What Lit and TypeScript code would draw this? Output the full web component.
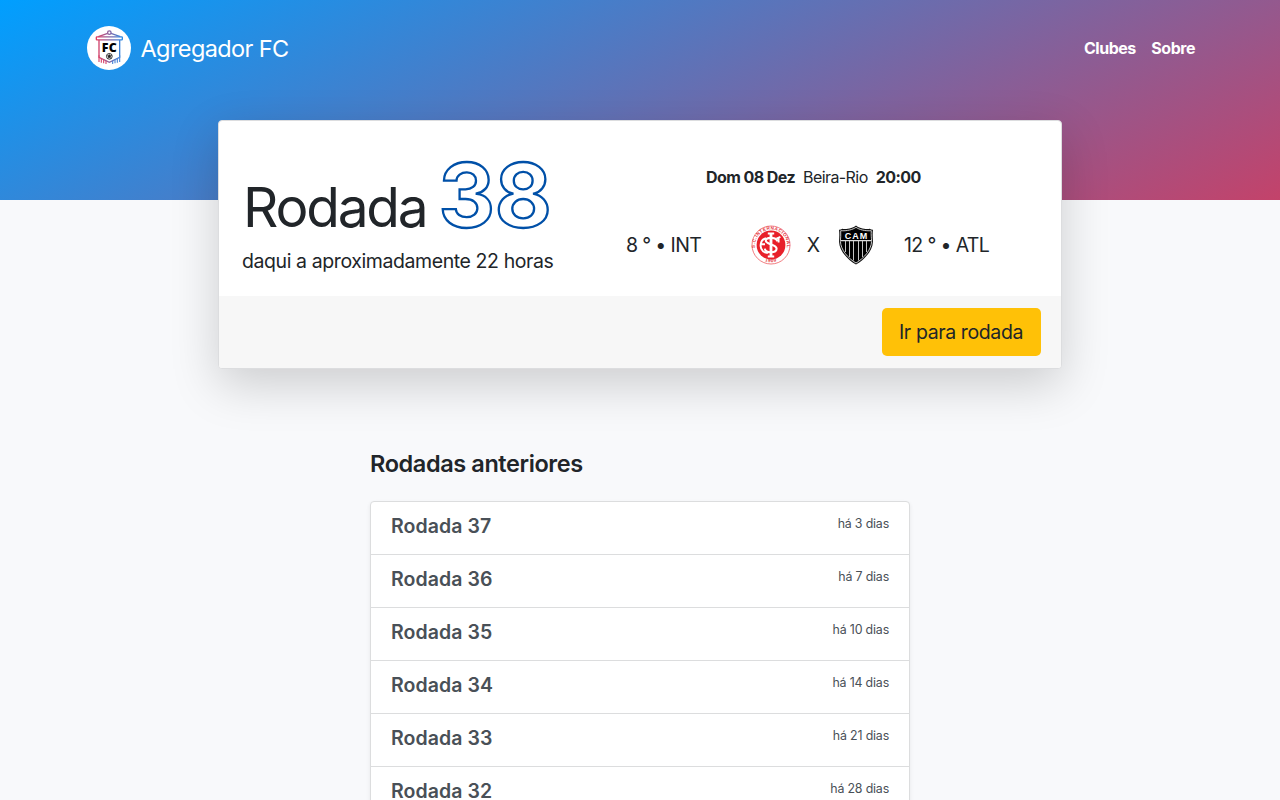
import { LitElement, html, css } from "lit";
import { customElement } from "lit/decorators.js";

const rounds = [
  { name: "Rodada 37", when: "há 3 dias" },
  { name: "Rodada 36", when: "há 7 dias" },
  { name: "Rodada 35", when: "há 10 dias" },
  { name: "Rodada 34", when: "há 14 dias" },
  { name: "Rodada 33", when: "há 21 dias" },
  { name: "Rodada 32", when: "há 28 dias" },
];

const logo = html`<svg class="logo" viewBox="0 0 66 66">
  <defs>
    <linearGradient id="flag" x1="14" x2="53" y1="0" y2="0" gradientUnits="userSpaceOnUse">
      <stop offset="0" stop-color="#e23a5e" />
      <stop offset="1" stop-color="#2b8be6" />
    </linearGradient>
  </defs>
  <circle cx="33" cy="33" r="33" fill="#fff" />
  <g fill="none" stroke="url(#flag)" stroke-width="2">
    <circle cx="33.5" cy="10" r="2.6" />
    <path d="M17 16L31 11M50 16L36 11" />
    <rect x="14" y="16.2" width="39" height="4.6" rx="1" />
    <path d="M18 21V47L33.5 54.5L49 47V21" />
  </g>
  <g stroke-width="1.7" fill="none">
    <path stroke="#d8466c" d="M18 44v10M21.5 48v7M25 50v6M28.5 52v5" />
    <path stroke="#4a86d8" d="M49 44v10M45.5 48v7M42 50v6M38.5 52v5" />
  </g>
  <text x="33.8" y="38.5" text-anchor="middle" class="logo-text">FC</text>
  <circle cx="33.5" cy="45.5" r="4.3" fill="#fff" stroke="#222" stroke-width="1.3" />
  <path d="M33.5 43l2.3 1.7-.9 2.8h-2.8l-.9-2.8zM33.5 43v-2M35.8 44.7l2-.8M34.9 47.5l1.3 1.8M32.1 47.5l-1.3 1.8M31.2 44.7l-2-.8" fill="#222" stroke="#222" stroke-width=".7" />
</svg>`;

const inter = html`<svg class="crest" viewBox="0 0 40 40">
  <defs>
    <path id="ring" d="M6.7 29.5A16 16 0 1 1 33.3 29.5" />
    <path id="ringb" d="M11 34.7A18.2 18.2 0 0 0 29 34.7" />
  </defs>
  <circle cx="20" cy="20" r="19" fill="#fff" stroke="#ee5a60" stroke-width=".8" />
  <circle cx="20" cy="20" r="14.4" fill="#e8202a" />
  <text class="ring-text"><textPath href="#ring" startOffset="50%" text-anchor="middle">S.C.INTERNACIONAL</textPath></text>
  <text class="ring-text"><textPath href="#ringb" startOffset="50%" text-anchor="middle">1909</textPath></text>
  <g fill="none" stroke="#fff">
    <path stroke-width="2.8" d="M20 8V32" />
    <path stroke-width="2" d="M16.8 8.6h6.4M16.8 31.4h6.4" />
    <path stroke-width="2.1" d="M26.2 16.4C26 12 15 11.6 14.8 15.8C14.6 19.4 25.8 19.2 25.6 23.8C25.3 28.6 14.4 28.4 13.8 23.6" />
    <path stroke-width="1.9" d="M25.5 13.6L29.4 11.8M27.6 12.4V17.5M15 13.2C9 14.5 8 23 12.2 26.4C13.5 27.6 15.5 28 17.2 27.6M9.6 19.3H14" />
  </g>
</svg>`;

const atletico = html`<svg class="crest" viewBox="0 0 40 40">
  <path d="M20 .5C22.6 3 29.5 4.6 33.6 3.8Q35.5 5 37 4.8C36.4 9 36.8 13 37 16.5C36.6 26 28.5 34.6 20 39.6C11.5 34.6 3.4 26 3 16.5C3.2 13 3.6 9 3 4.8Q4.5 5 6.4 3.8C10.5 4.6 17.4 3 20 .5Z" fill="#111" />
  <path d="M20 2.3C23 4.7 29.5 6.2 35.3 5.7C34.9 9.5 35.5 13 35.6 16.3C35.2 25 28 33.2 20 38C12 33.2 4.8 25 4.4 16.3C4.5 13 5.1 9.5 4.7 5.7C10.5 6.2 17 4.7 20 2.3Z" fill="#000" stroke="#ddd" stroke-width=".9" />
  <path d="M5 15.7H35" stroke="#ddd" stroke-width="1.2" />
  <path d="M9.5 16V27M13.5 16V32M17.5 16V35.5M22.5 16V35.5M26.5 16V32M30.5 16V27" stroke="#c4c4c4" stroke-width="1" />
  <text x="20.5" y="13.7" text-anchor="middle" class="cam-text">CAM</text>
</svg>`;

@customElement("app-root")
export class AppRoot extends LitElement {
  static styles = css`
    :host {
      display: block;
      height: 800px;
      overflow: hidden;
      background: #f8f9fb;
      color: #212529;
      font-family: Inter, "Liberation Sans", sans-serif;
    }
    * { box-sizing: border-box; }
    .hero {
      height: 200px;
      padding: 26px 85px 0 87px;
      background: linear-gradient(154deg, #009fff 0, #ec2f4b 895px);
    }
    .nav { display: flex; align-items: center; height: 44px; color: #fff; }
    .logo { width: 44px; height: 44px; display: block; }
    .logo-text { font: 900 18.5px "Noto Sans", sans-serif; fill: #000; letter-spacing: 0.6px; }
    .brand { margin-left: 9.5px; padding-top: 1px; font-size: 23.5px; letter-spacing: -0.6px; flex: 1; line-height: 30px; }
    .links { display: flex; gap: 15.5px; font-size: 16px; font-weight: 700; letter-spacing: -0.48px; }
    .card {
      width: 844px;
      height: 249px;
      margin: -80px auto 0;
      border: 1px solid #dcdddf;
      border-radius: 4px;
      background: #fff;
      box-shadow: 0 16px 48px rgba(0, 0, 0, 0.175);
      overflow: hidden;
      position: relative;
    }
    .body { display: flex; height: 175px; }
    .round { width: 356px; padding: 28.5px 0 0 23px; white-space: nowrap; }
    .title { display: flex; align-items: baseline; height: 96.5px; line-height: 90px; }
    .word { font-size: 55px; font-weight: 370; letter-spacing: -2.2px; margin-left: 1px; }
    .number {
      font-size: 87.5px;
      font-weight: 700;
      letter-spacing: -0.2px;
      margin-left: 12px;
      color: transparent;
      -webkit-text-stroke: 2.3px #0050a8;
    }
    .soon { font-size: 19.5px; font-weight: 370; line-height: 30px; letter-spacing: -0.41px; }
    .match { flex: 1; padding-top: 44px; }
    .info { display: flex; gap: 8px; margin-left: 131px; font-size: 16px; font-weight: 370; line-height: 24px; letter-spacing: -0.57px; }
    .info b { font-weight: 700; }
    .teams { display: flex; align-items: center; margin: 36px 0 0 51px; height: 40px; font-size: 19.5px; font-weight: 370; letter-spacing: -0.64px; }
    .home { width: 125px; }
    .versus { width: 45px; padding-right: 1px; text-align: center; }
    .away { margin-left: 28px; }
    .crest { width: 40px; height: 40px; display: block; }
    .ring-text { font: 700 4.6px "Liberation Sans", sans-serif; fill: #e5343c; letter-spacing: 0.45px; }
    .cam-text { font: 700 9px "Liberation Sans", sans-serif; fill: #fff; letter-spacing: 1px; }
    .footer { height: 72px; padding: 12px 20px; background: #f7f7f7; display: flex; justify-content: flex-end; }
    .btn {
      width: 159px; height: 48px; padding: 0 1px 0 0; border: 0; border-radius: 5px;
      background: #ffc107; color: #212529;
      font: 420 19.5px Inter, sans-serif;
      letter-spacing: -0.38px;
    }
    .previous { width: 540px; margin: 80px auto 0; }
    .heading { margin: 0; font-size: 23.5px; font-weight: 560; line-height: 29px; letter-spacing: -0.4px; }
    .list {
      margin-top: 23px; border: 1px solid #dcddde; border-radius: 4px; background: #fff;
      box-shadow: 0 2px 4px rgba(0, 0, 0, 0.075);
    }
    .row { height: 53px; padding: 12px 20px; display: flex; justify-content: space-between; border-bottom: 1px solid #dcddde; color: #495057; }
    .name { font-size: 19.5px; font-weight: 570; line-height: 24px; letter-spacing: 0.07px; }
    .when { font-size: 12.4px; font-weight: 420; line-height: 19px; letter-spacing: -0.18px; }
  `;

  render() {
    return html`
      <header class="hero">
        <nav class="nav">
          ${logo}
          <span class="brand">Agregador FC</span>
          <div class="links"><span>Clubes</span><span>Sobre</span></div>
        </nav>
      </header>
      <section class="card">
        <div class="body">
          <div class="round">
            <div class="title"><span class="word">Rodada</span><span class="number">38</span></div>
            <div class="soon">daqui a aproximadamente 22 horas</div>
          </div>
          <div class="match">
            <div class="info"><b>Dom 08 Dez</b><span>Beira-Rio</span><b>20:00</b></div>
            <div class="teams">
              <span class="home">8 ° • INT</span>${inter}
              <span class="versus">X</span>${atletico}
              <span class="away">12 ° • ATL</span>
            </div>
          </div>
        </div>
        <div class="footer"><button class="btn">Ir para rodada</button></div>
      </section>
      <main class="previous">
        <h2 class="heading">Rodadas anteriores</h2>
        <div class="list">
          ${rounds.map((r) => html`<div class="row"><span class="name">${r.name}</span><span class="when">${r.when}</span></div>`)}
        </div>
      </main>
    `;
  }
}
